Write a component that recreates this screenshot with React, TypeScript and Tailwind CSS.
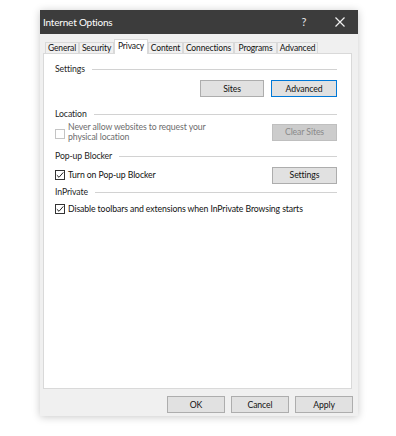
import React from "react";

const font = { fontFamily: "Lato, 'Open Sans', sans-serif" };
const txt = "text-[8.7px] tracking-[-0.1px]";

function Header({ label, top }: { label: string; top: string }) {
  return (
    <div className={`flex items-center h-[12px] ${top} pl-[11px] pr-[14px]`}>
      <span className="text-[8.7px] tracking-[-0.1px] leading-[12px] text-[#1e1e1e]">{label}</span>
      <div className="flex-1 h-px bg-[#d2d2d2] ml-[7px]" />
    </div>
  );
}

function Check({ checked, disabled }: { checked?: boolean; disabled?: boolean }) {
  return (
    <div
      className={`w-[10px] h-[10px] shrink-0 border bg-white flex items-center justify-center ${
        disabled ? "border-[#c4c4c4]" : "border-[#333333]"
      }`}
    >
      {checked && (
        <svg width="8" height="8" viewBox="0 0 8 8">
          <path d="M0.8 4.2 L3 6.3 L7.3 1.4" fill="none" stroke="#222" strokeWidth="1" />
        </svg>
      )}
    </div>
  );
}

function Btn({ label, w, variant }: { label: string; w: string; variant?: "focus" | "disabled" }) {
  const cls =
    variant === "focus"
      ? "border-[#0078d7] bg-[#e1e1e1] text-[#111]"
      : variant === "disabled"
      ? "border-[#bfbfbf] bg-[#cccccc] text-[#8a8a8a]"
      : "border-[#adadad] bg-[#e1e1e1] text-[#111]";
  return (
    <div
      className={`${w} h-[17px] border flex items-center justify-center text-[8.7px] tracking-[-0.1px] ${cls}`}
    >
      {label}
    </div>
  );
}

const tabs: { label: string; w: string }[] = [
  { label: "General", w: "w-[34px]" },
  { label: "Security", w: "w-[35px]" },
  { label: "Privacy", w: "w-[34px]" },
  { label: "Content", w: "w-[35px]" },
  { label: "Connections", w: "w-[51px]" },
  { label: "Programs", w: "w-[43px]" },
  { label: "Advanced", w: "w-[41px]" },
];

export default function App() {
  return (
    <div className="w-[396px] h-[436px] bg-white pt-[10px] pl-[40px]" style={font}>
      <div className="w-[318px] h-[406px] flex flex-col bg-[#f0f0f0] shadow-[0_1px_8px_rgba(0,0,0,0.22)]">
        {/* title bar */}
        <div className="h-[24px] bg-[#3c3c3c] flex items-center pl-[3px] text-white">
          <span className="text-[10px] tracking-[-0.2px]">Internet Options</span>
          <div className="flex-1" />
          <span className="text-[11px] w-[14px] text-center text-[#e8e8e8]">?</span>
          <div className="w-[24px]" />
          <svg width="10" height="10" viewBox="0 0 10 10" className="mr-[13px]">
            <path d="M0.5 0.5 L9.5 9.5 M9.5 0.5 L0.5 9.5" stroke="#f0f0f0" strokeWidth="1.2" />
          </svg>
        </div>
        {/* tabs */}
        <div className="h-[19px] flex items-end pl-[5px]">
          {tabs.map((t) =>
            t.label === "Privacy" ? (
              <div
                key={t.label}
                className={`${t.w} h-[15px] -mb-px relative z-10 bg-white border-x border-t border-[#d9d9d9] flex justify-center pt-[1px] text-[8.5px] tracking-[-0.15px] leading-[11px] text-[#111]`}
              >
                {t.label}
              </div>
            ) : (
              <div
                key={t.label}
                className={`${t.w} h-[11px] bg-[#f0f0f0] border-x border-t border-[#d9d9d9] flex justify-center text-[8.5px] tracking-[-0.15px] leading-[11px] text-[#111]`}
              >
                {t.label}
              </div>
            )
          )}
        </div>
        {/* panel */}
        <div className="ml-[3px] w-[309px] h-[336px] bg-white border border-[#d9d9d9] flex flex-col pt-[9px]">
          <Header label="Settings" top="" />
          <div className="flex justify-end gap-[7px] pr-[14px] mt-[5px]">
            <Btn label="Sites" w="w-[64px]" />
            <Btn label="Advanced" w="w-[66px]" variant="focus" />
          </div>
          <Header label="Location" top="mt-[11px]" />
          <div className="flex items-center pl-[11px] pr-[14px] mt-[2px] h-[20px]">
            <div className="mt-[3px]">
              <Check disabled />
            </div>
            <div className={`ml-[3px] ${txt} leading-[10px] text-[#6d6d6d]`}>
              Never allow websites to request your
              <br />
              physical location
            </div>
            <div className="flex-1" />
            <Btn label="Clear Sites" w="w-[65px]" variant="disabled" />
          </div>
          <Header label="Pop-up Blocker" top="mt-[8px]" />
          <div className="flex items-center pl-[11px] pr-[14px] mt-[5px] h-[16px]">
            <Check checked />
            <span className={`ml-[3px] ${txt} text-[#111]`}>Turn on Pop-up Blocker</span>
            <div className="flex-1" />
            <Btn label="Settings" w="w-[65px]" />
          </div>
          <Header label="InPrivate" top="mt-[3px]" />
          <div className="flex items-center pl-[11px] pr-[14px] mt-[5px] h-[12px]">
            <Check checked />
            <span className={`ml-[3px] ${txt} text-[#111]`}>
              Disable toolbars and extensions when InPrivate Browsing starts
            </span>
          </div>
        </div>
        {/* bottom buttons */}
        <div className="flex justify-end gap-[6px] pr-[5px] mt-[7px]">
          <Btn label="OK" w="w-[58px]" />
          <Btn label="Cancel" w="w-[58px]" />
          <Btn label="Apply" w="w-[58px]" />
        </div>
      </div>
    </div>
  );
}
